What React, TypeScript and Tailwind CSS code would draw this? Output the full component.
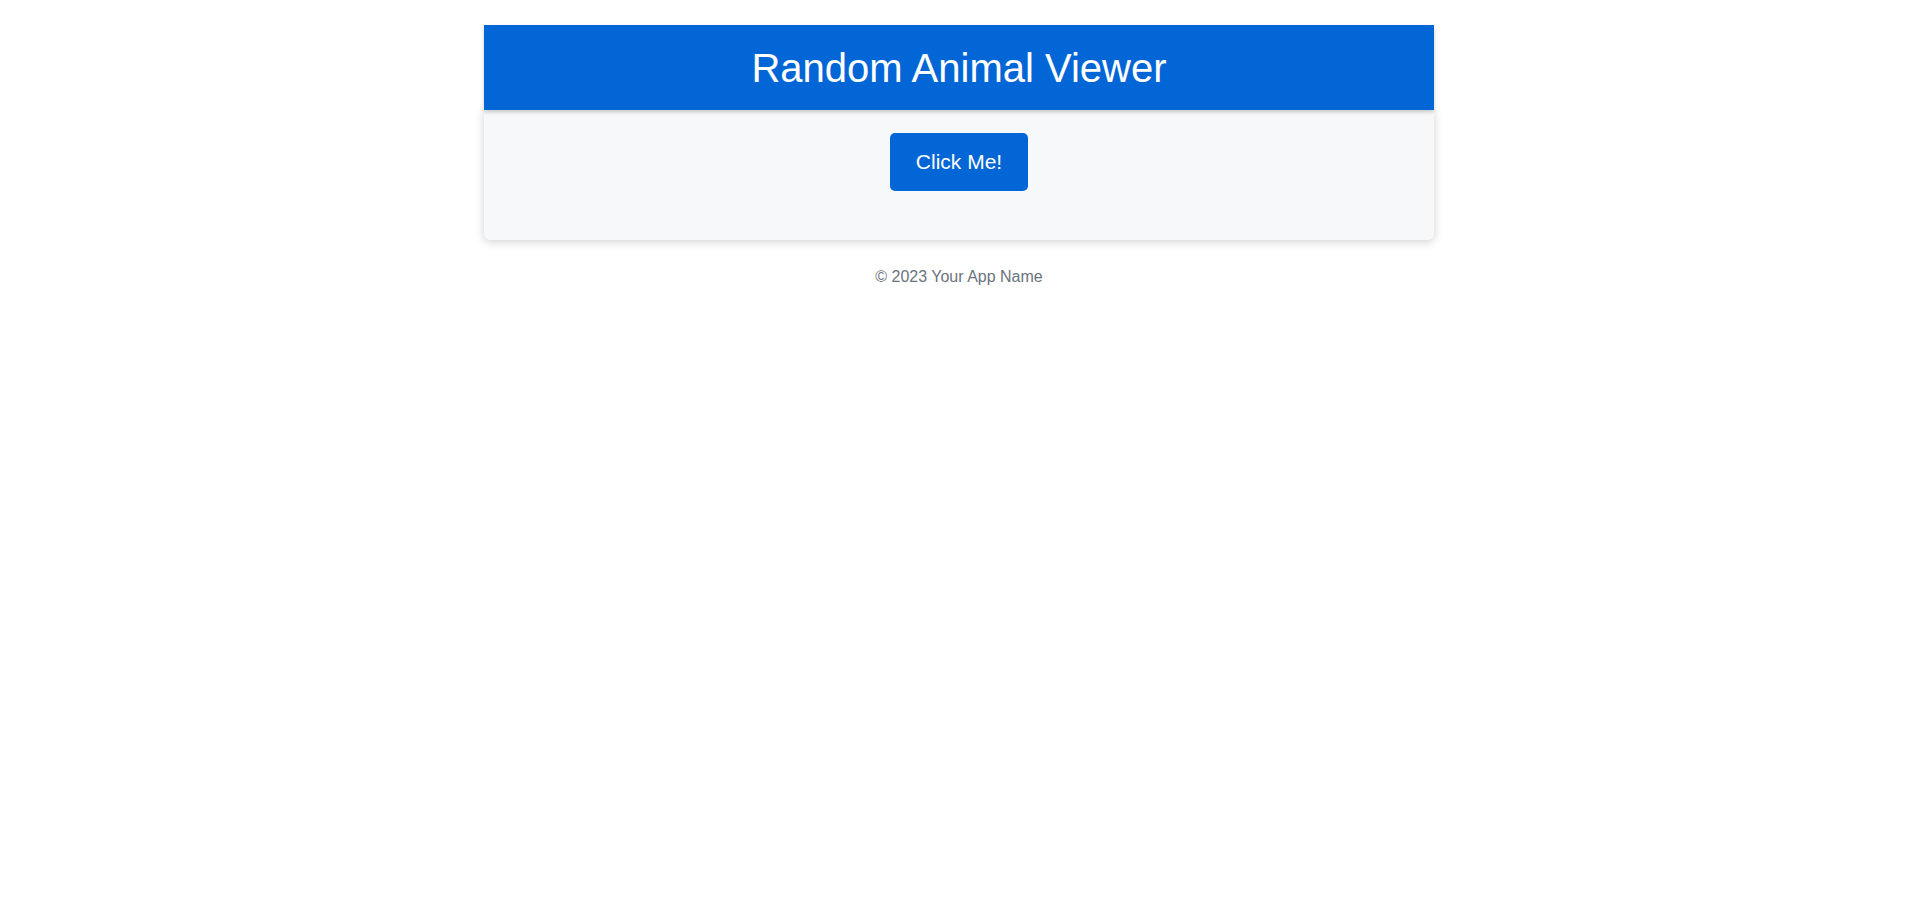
import React from "react";

export default function App() {
  return (
    <div className="min-h-screen bg-white" style={{ fontFamily: '"Liberation Sans", Arial, sans-serif' }}>
      <div className="mx-auto w-[950px] pt-[25px]">
        <header className="relative z-10 flex h-[85px] items-center justify-center bg-[#0366d6] shadow-[0_2px_4px_rgba(0,0,0,0.2)]">
          <h1 className="text-[40px] leading-none font-normal text-white">Random Animal Viewer</h1>
        </header>
        <main className="flex justify-center rounded-b-md bg-[#f6f8fa] pt-[23px] pb-[49px] shadow-[0_2px_10px_rgba(0,0,0,0.18)]">
          <button className="flex h-[58px] w-[138px] items-center justify-center rounded-[5px] bg-[#0366d6] text-[21px] text-white">
            Click Me!
          </button>
        </main>
        <footer className="mt-[25px] text-center text-[16px] text-[#6a737d]">© 2023 Your App Name</footer>
      </div>
    </div>
  );
}
